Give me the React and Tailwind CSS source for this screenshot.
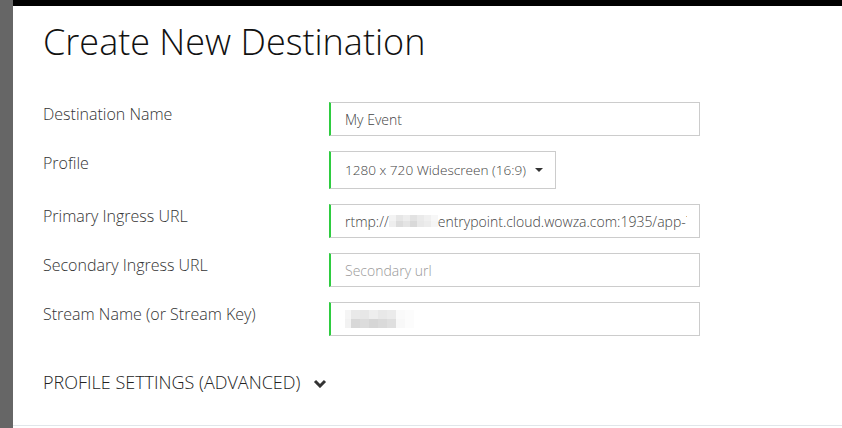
import React from "react";

function Blur({ rows, cw, ch }) {
  return (
    <span className="inline-flex flex-col align-middle shrink-0">
      {rows.map((r, i) => (
        <span key={i} className="flex">
          {r.map((c, j) => (
            <span key={j} style={{ width: cw, height: ch, background: c }} />
          ))}
        </span>
      ))}
    </span>
  );
}

function Field({ children, w = "w-[371px]", h = "h-[34px]" }) {
  return (
    <div className={`${w} ${h} shrink-0 border border-[#cccccc] border-l-2 border-l-[#2ecc40] bg-white flex items-center pl-[14px] pr-[12px] text-[14px] font-light text-[#444]`}>
      <div className="flex items-center overflow-hidden whitespace-nowrap min-w-0">{children}</div>
    </div>
  );
}

function Row({ label, children, h = "h-[34px]" }) {
  return (
    <div className={`flex ${h}`}>
      <div className="w-[286px] shrink-0 text-[16px] font-light leading-[24px] text-[#333]">{label}</div>
      {children}
    </div>
  );
}

export default function App() {
  return (
    <div className="flex w-[842px] h-[428px] bg-white overflow-hidden" style={{ fontFamily: '"Open Sans", "Liberation Sans", sans-serif' }}>
      <div className="w-[13px] shrink-0 bg-[#666666]" />
      <div className="flex-1 flex flex-col">
        <div className="h-[6px] bg-black shrink-0" />
        <div className="flex-1 pl-[30px]">
          <h1 className="text-[36px] font-light leading-[44px] text-[#111] mt-[14px] mb-[38px]">Create New Destination</h1>
          <div className="flex flex-col gap-[15px]">
            <Row label="Destination Name">
              <Field>My Event</Field>
            </Row>
            <Row label="Profile" h="h-[38px]">
              <Field w="w-[227px]" h="h-[38px]">
                <span className="text-[13.6px]">1280 x 720 Widescreen (16:9)</span>
                <svg width="8" height="4" viewBox="0 0 8 4" className="ml-[9px] shrink-0"><path d="M0 0h8L4 4z" fill="#333" /></svg>
              </Field>
            </Row>
            <Row label="Primary Ingress URL">
              <Field>
                <span>rtmp://</span>
                <Blur cw={7} ch={6} rows={[["#f3f3f3", "#e6e6e6", "#ededed", "#e2e2e2", "#eaeaea", "#f0f0f0", "#f7f7f7"], ["#eeeeee", "#dcdcdc", "#e4e4e4", "#d9d9d9", "#e8e8e8", "#ececec", "#f5f5f5"]]} />
                <span>entrypoint.cloud.wowza.com:1935/app-7b3c</span>
              </Field>
            </Row>
            <Row label="Secondary Ingress URL">
              <Field><span className="text-[#999]">Secondary url</span></Field>
            </Row>
            <Row label="Stream Name (or Stream Key)">
              <Field>
                <span className="-ml-[3px] flex">
                  <Blur cw={9} ch={9} rows={[["#f5f5f5", "#e9e9e9", "#e7e7e7", "#eeeeee", "#e8e8e8", "#ebebeb", "#fafafa", "#fcfcfc"], ["#f2f2f2", "#d8d8d8", "#dcdcdc", "#d6d6d6", "#dadada", "#dfdfdf", "#f8f8f8", "#fcfcfc"]]} />
                </span>
              </Field>
            </Row>
          </div>
          <div className="mt-[33px] flex items-center text-[18px] font-light text-[#222] leading-[26px]">
            <span>PROFILE SETTINGS (ADVANCED)</span>
            <svg width="14" height="9" viewBox="0 0 14 9" className="ml-[13px] mt-[3px]"><path d="M2 2l5 5 5-5" stroke="#333" strokeWidth="3" fill="none" /></svg>
          </div>
        </div>
        <div className="h-px bg-[#e1e6ea] shrink-0" />
        <div className="h-[2px] shrink-0" />
      </div>
    </div>
  );
}
